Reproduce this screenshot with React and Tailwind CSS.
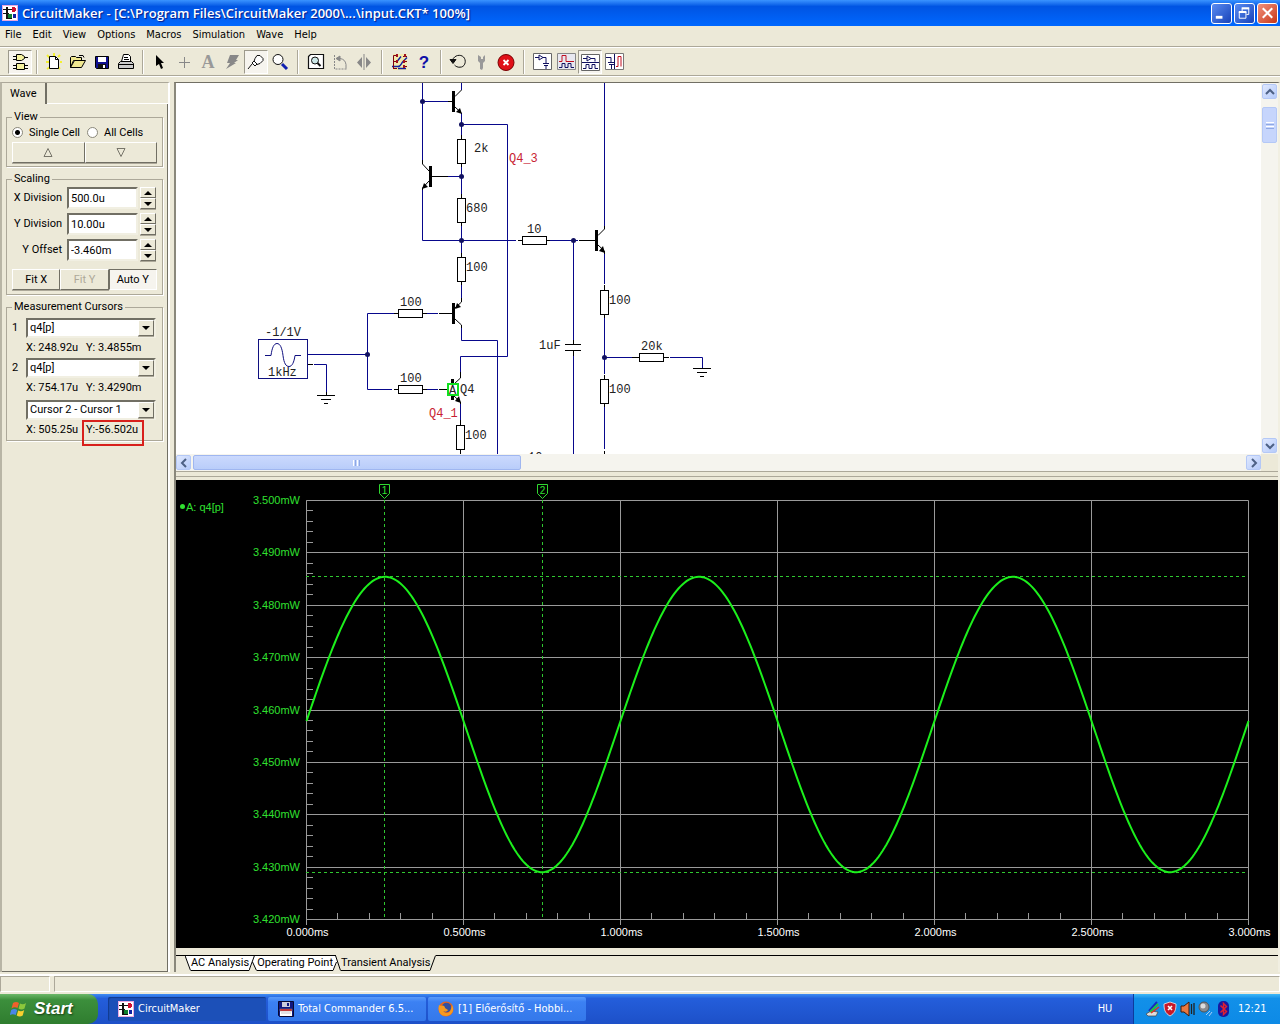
const MENUS = ['File', 'Edit', 'View', 'Options', 'Macros', 'Simulation', 'Wave', 'Help'];

function AppIcon() {
  return (
    <svg viewBox="0 0 16 16" className="h-4 w-4 shrink-0" shapeRendering="crispEdges">
      <rect width="16" height="16" fill="#e8a8e0" />
      <rect x="1" y="1" width="14" height="14" fill="#fff" />
      <path d="M1 4h9M1 8h6" fill="none" stroke="#111" strokeWidth="1" />
      <path d="M5 2v11h5" fill="none" stroke="#111" strokeWidth="2" />
      <path d="M10 2h3v1h1v3h-1v1h-3z" fill="#d01030" />
      <path d="M6 9h4v4H6z" fill="#108030" />
      <path d="M11 9h3v4h-3z" fill="#1020a0" />
    </svg>
  );
}

function TitleBar() {
  const base =
    'flex h-[21px] w-[21px] items-center justify-center rounded-[3px] border border-white bg-linear-to-br';
  return (
    <header className="flex h-[26px] shrink-0 items-center gap-1 bg-linear-to-b from-[#3a93ff] from-0% via-[#0054e3] via-25% to-[#0068ff] px-0.5">
      <AppIcon />
      <h1 className="flex-1 truncate font-['Open_Sans',sans-serif] text-[13px] leading-5 font-semibold text-white [text-shadow:1px_1px_1px_#0a1883]">
        CircuitMaker - [C:\Program Files\CircuitMaker 2000\...\input.CKT* 100%]
      </h1>
      <div className="flex gap-0.5">
        <button type="button" aria-label="Minimize" className={`${base} from-[#5b8cf2] to-[#1941b8]`}>
          <svg viewBox="0 0 20 20" className="h-5 w-5">
            <path d="M4 14.5h7" stroke="#fff" strokeWidth="3" />
          </svg>
        </button>
        <button type="button" aria-label="Restore" className={`${base} from-[#5b8cf2] to-[#1941b8]`}>
          <svg viewBox="0 0 20 20" className="h-5 w-5" fill="none" stroke="#fff">
            <path d="M7.500 8V5.500h7v6H12" />
            <path d="M7 5h8M4 9h8" strokeWidth="2" />
            <path d="M4.500 9v6.500h7V9" />
          </svg>
        </button>
        <button type="button" aria-label="Close" className={`${base} from-[#f0907a] to-[#c83410]`}>
          <svg viewBox="0 0 20 20" className="h-5 w-5">
            <path d="M5 5l10 10M15 5L5 15" stroke="#fff" strokeWidth="2.200" />
          </svg>
        </button>
      </div>
    </header>
  );
}

const TOOL_GROUPS = [
  {
    lead: 'w-2',
    tools: [
      {
        name: 'Digital parts',
        pressed: true,
        art: (
          <g fill="#f5f2a0" stroke="#000">
            <path d="M6.500 2.500h5l3 2v2l-3 2h-5z" />
            <path d="M6.500 11.500h8v6h-8z" />
            <path d="M3 4.500h3M3 7.500h3M15 5.500h3M3 13.500h3M3 16.500h3M15 13.500h3M15 16.500h3" />
          </g>
        ),
      },
    ],
  },
  {
    lead: 'w-2.5',
    tools: [
      {
        name: 'New',
        art: (
          <g>
            <path d="M3 3l3 3M10 1v3M16 3l-2 2M2 10h3M16 10h2M3 17l3-2M16 17l-2-2" stroke="#f4f030" strokeWidth="2" />
            <path d="M5.500 4.500h6l3 3v9h-9z" fill="#fff" stroke="#000" />
            <path d="M11.500 4.500v3h3" fill="none" stroke="#000" />
          </g>
        ),
      },
      {
        name: 'Open',
        art: (
          <g stroke="#000" fill="#f0e890">
            <path d="M2.500 15.500v-10l1-1h4l1 1h5v3h-8z" />
            <path d="M2.500 15.500l4-7h11l-4 7z" />
            <path d="M11 3.500h4l1 2" fill="none" />
          </g>
        ),
      },
      {
        name: 'Save',
        art: (
          <g>
            <path d="M3.500 4.500h13v12h-12l-1-1z" fill="#101090" stroke="#000" />
            <path d="M6 5h8v5H6z" fill="#fff" />
            <path d="M6 12h8v4H6z" fill="#111" />
            <path d="M11 13h2v3h-2z" fill="#fff" />
          </g>
        ),
      },
      {
        name: 'Print',
        art: (
          <g stroke="#000">
            <path d="M5.500 9.500l2-7h5l2 2v5" fill="#fff" />
            <path d="M8 5.500h4M8 7.500h5" />
            <path d="M2.500 11.500l2-2h11l2 2v5h-15z" fill="#ccc" />
            <path d="M2.500 12.500h15" />
          </g>
        ),
      },
    ],
  },
  {
    lead: 'w-2.5',
    tools: [
      {
        name: 'Arrow',
        art: <path d="M6 3l8 8h-3l2 5-2 1-2-5-3 2z" fill="#000" />,
      },
      { name: 'Wire', art: <path d="M10.500 5v11M5 10.500h11" stroke="#888" /> },
      {
        name: 'Text',
        art: (
          <text x="10" y="16" textAnchor="middle" fontSize="18" fontWeight="bold" fill="#999" fontFamily="Liberation Serif, serif">
            A
          </text>
        ),
      },
      { name: 'Delete', art: <path d="M8 3h9l-3 5h2l-4 3h2L4 17l4-6H5z" fill="#888" /> },
      {
        name: 'Probe',
        pressed: true,
        art: (
          <g fill="#fff" stroke="#111">
            <path d="M11 3.500h3l3 3v2l-3 3-3 1-3-3 1-3z" />
            <path d="M8 9l3 3-2 2-3-3zM6 12l-4 5" />
          </g>
        ),
      },
      {
        name: 'Zoom',
        art: (
          <g fill="none">
            <circle cx="8" cy="7.500" r="5" fill="#fff" stroke="#111" />
            <path d="M12 12l5 5" stroke="#1020b0" strokeWidth="3" />
          </g>
        ),
      },
    ],
  },
  {
    lead: 'w-3',
    tools: [
      {
        name: 'Zoom to fit',
        art: (
          <g fill="none" stroke="#111">
            <path d="M2.500 4.500l2-2h13v14h-15z" fill="#fff" strokeWidth="1.200" />
            <circle cx="9" cy="8.500" r="3.500" fill="#cde8e8" />
            <path d="M11.500 11l3 3" strokeWidth="2" />
          </g>
        ),
      },
      {
        name: 'Rotate',
        art: (
          <g fill="none" stroke="#888">
            <path d="M4.500 3v14h12" strokeDasharray="2 1" />
            <path d="M6 6.500h4a7 7 0 0 1 6 6v4" />
            <path d="M10 4v5l-4-2.500z" fill="#888" />
          </g>
        ),
      },
      {
        name: 'Mirror',
        art: <path d="M8 5v11l-5-5.500zM12 5v11l5-5.500zM9.500 2h1v16h-1z" fill="#888" />,
      },
    ],
  },
  {
    lead: 'w-3',
    tools: [
      {
        name: 'Select devices',
        art: (
          <g fill="none">
            <path d="M3 2h14v16H3z" fill="#f8ec80" opacity=".5" />
            <path d="M2 14.500h6c3 0 3-3 5-5l4-4M7 9.500l4-5M8 16.500h8" stroke="#1020a0" strokeWidth="1.400" />
            <path d="M7 3.500H3.500v13M3 9.500h4M3 16.500h4M13 4.500h4M13 9.500h4M13 14.500h4" stroke="#800010" />
            <path d="M6 2h2v3H6zM6 8h2v3H6zM13 8h2v3h-2zM13 13h2v3h-2zM14 2h2v3h-2z" fill="#a01020" />
          </g>
        ),
      },
      {
        name: 'Help',
        art: (
          <text x="10" y="16" textAnchor="middle" fontSize="17" fontWeight="bold" fill="#1010a8" fontFamily="Liberation Sans, sans-serif">
            ?
          </text>
        ),
      },
    ],
  },
  {
    lead: 'w-2.5',
    tools: [
      {
        name: 'Reset',
        art: (
          <g fill="none" stroke="#111">
            <path d="M4.500 8c2-5 8-6 11-3s2 9-2 10-6-1-7-2" />
            <path d="M2 7.500h6l-3 4z" fill="#111" />
          </g>
        ),
      },
      {
        name: 'Step',
        art: <path d="M6 3l3 2v2h2V5l2-2v6l-2 2v5l-1 2-2-1v-6L6 9z" fill="#999" />,
      },
      {
        name: 'Stop',
        art: (
          <g>
            <circle cx="10" cy="10.500" r="8" fill="#e01018" stroke="#700" />
            <path d="M7.500 8l5 5M12.500 8l-5 5" stroke="#fff" strokeWidth="1.800" />
          </g>
        ),
      },
    ],
  },
  {
    lead: 'w-3',
    tools: [
      {
        name: 'Schematic',
        art: (
          <g fill="none" stroke="#101060">
            <path d="M1.500 1.500h18v16h-18z" fill="#fff" stroke="#666" />
            <path d="M3 5.500h4M7 3v5l4-2.500zM11 5.500h3v6M11 11.500h6M12 13.500h4M14 14v3" />
          </g>
        ),
      },
      {
        name: 'Waves',
        art: (
          <g fill="none">
            <path d="M1.500 1.500h18v16h-18z" fill="#e8e8f0" stroke="#888" />
            <path d="M3 9.500h3v-6h4v6h8" stroke="#c01020" />
            <path d="M3 15.500h3v-4h3v4h3v-4h3v4h3" stroke="#101060" />
          </g>
        ),
      },
      {
        name: 'Split horizontally',
        pressed: true,
        art: (
          <g fill="none" stroke="#101060">
            <path d="M1.500 2.500h18v16h-18z" fill="#fff" stroke="#666" />
            <path d="M3 6.500h4M7 4v5l4-2.500zM11 6.500h4v3M2 10.500h17" />
            <path d="M3 16.500h3v-4h3v4h3v-4h3v4h3" />
          </g>
        ),
      },
      {
        name: 'Split vertically',
        art: (
          <g fill="none">
            <path d="M1.500 1.500h18v16h-18z" fill="#fff" stroke="#777" />
            <path d="M2 5.500h5v5M4 10.500h6M5 12.500h5M7.500 13v4M10.500 2v15" stroke="#101060" />
            <path d="M12 14.500h2v-10h3v10" stroke="#c01020" />
          </g>
        ),
      },
    ],
  },
];

function Toolbar() {
  return (
    <div
      role="toolbar"
      className="flex h-[29px] shrink-0 items-center border-y border-t-white border-b-[#aca899] shadow-[0_-1px_0_#aca899,0_1px_0_#fff]"
    >
      {TOOL_GROUPS.map((group, index) => (
        <div key={group.tools[0].name} className="flex items-center">
          <span className={`flex h-6 justify-center ${group.lead}`}>
            {index > 0 && <span className="w-0.5 border-r border-l border-r-white border-l-[#aca899]" />}
          </span>
          {group.tools.map((tool) => (
            <button
              key={tool.name}
              type="button"
              aria-label={tool.name}
              className={`flex h-6 w-6 items-center justify-center border ${
                tool.pressed ? 'border-t-[#9d9a8c] border-r-white border-b-white border-l-[#9d9a8c] bg-[#f6f4ee]' : 'border-transparent'
              }`}
            >
              <svg viewBox="0 0 20 20" className="h-5 w-5 shrink-0">
                {tool.art}
              </svg>
            </button>
          ))}
        </div>
      ))}
    </div>
  );
}

function Group({ title, className = '', children }) {
  return (
    <fieldset className={`relative border border-[#aca899] px-[5px] shadow-[1px_1px_0_#fff] ${className}`}>
      <legend className="px-0.5 leading-3">{title}</legend>
      {children}
    </fieldset>
  );
}

const RAISED =
  'border border-t-white border-r-[#716f64] border-b-[#716f64] border-l-white shadow-[0_1px_0_#aca899]';
const SUNKEN =
  'border-2 border-t-[#716f64] border-r-[#f1efe2] border-b-[#f1efe2] border-l-[#716f64] bg-white';

function ScalingField({ id, label, value }) {
  return (
    <div className="flex h-[22px] items-center">
      <label htmlFor={id} className="w-[50px] shrink-0 text-right whitespace-nowrap">
        {label}
      </label>
      <input id={id} defaultValue={value} className={`ml-[5px] h-[22px] w-[71px] min-w-0 px-0.5 ${SUNKEN}`} />
      <div className="ml-0.5 flex w-4 flex-col">
        <button type="button" aria-label={`Increase ${label}`} className={`flex h-[11px] items-center justify-center ${RAISED}`}>
          <svg viewBox="0 0 8 4" className="h-1 w-2">
            <path d="M0 4l4-4 4 4z" />
          </svg>
        </button>
        <button type="button" aria-label={`Decrease ${label}`} className={`flex h-[11px] items-center justify-center ${RAISED}`}>
          <svg viewBox="0 0 8 4" className="h-1 w-2">
            <path d="M0 0l4 4 4-4z" />
          </svg>
        </button>
      </div>
    </div>
  );
}

function CursorSelect({ id, label, value }) {
  return (
    <div className="flex h-5 items-center">
      <label htmlFor={id} className="w-3.5 shrink-0">
        {label}
      </label>
      <div className="relative w-[130px]">
        <select
          id={id}
          defaultValue={value}
          aria-label={label ? undefined : 'Difference'}
          className={`block h-5 w-full appearance-none px-0.5 ${SUNKEN}`}
        >
          <option>{value}</option>
        </select>
        <span
          className={`pointer-events-none absolute inset-y-0.5 right-0.5 flex w-4 items-center justify-center bg-[#ece9d8] ${RAISED}`}
        >
          <svg viewBox="0 0 8 4" className="h-1 w-2">
            <path d="M0 0l4 4 4-4z" />
          </svg>
        </span>
      </div>
    </div>
  );
}

function Readout({ x, y, marked }) {
  return (
    <p className="flex h-5 items-center pl-3.5">
      <span className="w-15">X: {x}</span>
      <span className="relative">
        {marked ? `Y:${y}` : `Y: ${y}`}
        {marked && <span className="absolute -top-0.5 -right-1.5 -bottom-2 -left-1 border-2 border-[#d8201c]" />}
      </span>
    </p>
  );
}

const RADIO = 'h-[11px] w-[11px] shrink-0 appearance-none rounded-full border border-[#8a887b]';

function Sidebar() {
  return (
    <aside className="flex w-[170px] shrink-0 flex-col border-t border-r-2 border-l-2 border-t-[#aca899] border-r-white border-l-[#b8b5a5] font-['Roboto','Liberation_Sans',sans-serif] text-[11px] leading-4">
      <div className="flex h-[21px]">
        <button type="button" className="border-r-2 border-[#716f64] px-2">
          Wave
        </button>
        <span className="flex-1 border-b border-white" />
      </div>
      <div className="flex flex-1 flex-col border-r border-b border-[#716f64] pt-[7px] pr-1 pl-1">
        <Group title="View" className="pb-[3px]">
          <div className="flex h-[19px] items-center">
            <label className="flex w-[75px] items-center gap-1.5 whitespace-nowrap">
              <input
                type="radio"
                name="cells"
                defaultChecked
                className={`${RADIO} bg-[radial-gradient(#000_2px,#fff_3px)]`}
              />
              Single Cell
            </label>
            <label className="flex items-center gap-1.5 whitespace-nowrap">
              <input type="radio" name="cells" className={`${RADIO} bg-white`} />
              All Cells
            </label>
          </div>
          <div className="flex">
            <button type="button" aria-label="Previous cell" className={`flex h-[21px] flex-1 items-center justify-center ${RAISED}`}>
              <svg viewBox="0 0 10 9" className="h-[9px] w-2.5">
                <path d="M1 8.500h8l-4-8z" fill="none" stroke="#77756a" />
              </svg>
            </button>
            <button type="button" aria-label="Next cell" className={`flex h-[21px] flex-1 items-center justify-center ${RAISED}`}>
              <svg viewBox="0 0 10 9" className="h-[9px] w-2.5">
                <path d="M1 .5h8l-4 8z" fill="none" stroke="#77756a" />
              </svg>
            </button>
          </div>
        </Group>

        <Group title="Scaling" className="mt-1.5 pb-1">
          <div className="flex flex-col gap-1 pt-0.5">
            <ScalingField id="x-division" label="X Division" value="500.0u" />
            <ScalingField id="y-division" label="Y Division" value="10.00u" />
            <ScalingField id="y-offset" label="Y Offset" value="-3.460m" />
          </div>
          <div className="mt-2 flex">
            <button type="button" className={`h-[21px] flex-1 ${RAISED}`}>
              Fit X
            </button>
            <button type="button" disabled className={`h-[21px] flex-1 text-[#aca899] ${RAISED}`}>
              Fit Y
            </button>
            <button
              type="button"
              className="h-[21px] flex-1 border border-t-[#716f64] border-r-white border-b-white border-l-[#716f64] bg-[#f6f4ee]"
            >
              Auto Y
            </button>
          </div>
        </Group>

        <Group title="Measurement Cursors" className="mt-1.5 pt-[5px]">
          <CursorSelect id="cursor-1" label="1" value="q4[p]" />
          <Readout x="248.92u" y="3.4855m" />
          <CursorSelect id="cursor-2" label="2" value="q4[p]" />
          <Readout x="754.17u" y="3.4290m" />
          <div className="pt-0.5">
            <CursorSelect id="cursor-diff" value="Cursor 2 - Cursor 1" />
            <Readout x="505.25u" y="-56.502u" marked />
          </div>
        </Group>
      </div>
    </aside>
  );
}

const WIRES = [
  'M422.500 83V160M422.500 101.500H448M461.500 83V90M461.500 113V135M461.500 124.500H507.500V356.500H460.500V372',
  'M461.500 167V194M448 176.500H461.500M422.500 190V240.500H516M461.500 226V253M461.500 285V298',
  'M550 240.500H578M573.500 240V340M573.500 356V454M604.500 83V226M604.500 254V284M604.500 318V374M604.500 357.500H632',
  'M670 357.500H702.500V368M604.500 407V449M308 354.500H367.500M394 313.500H367.500V389.500H392M426 313.500H438M426 389.500H438',
  'M461.500 328V340.500H497.500V454M460.500 404V420M314 364.500H326.500V392',
];

const LEADS = [
  'M448 101.500H453M455 96.500L461.500 90M455 107L461.500 113M461.500 135V139M461.500 164V167M461.500 194V198M461.500 223V226',
  'M422.500 160V164L429 171M429 181L422.500 188V190M432 176.500H448M461.500 253V257M461.500 282V285M461.500 298V302L455 308',
  'M455 319L461.500 325V328M422 313.500H427M439 313.500H452M422 389.500H427M439 389.500H447M394 313.500H398M394 389.500H398',
  'M460.500 372V378L454 384M454 396L460.500 402V404M460.500 420V425M460.500 450V454M518 240.500H522M547 240.500H550M579 240.500H595',
  'M598 235.500L604.500 229V226M598 245L604.500 251V254M604.500 285V290M604.500 315V318M604.500 375V379M604.500 404V407M604.500 451V454',
  'M632 357.500H639M664 357.500H669M308 364.500H313M565 344.500H581M565 350.500H581M573.500 340V344M573.500 351V356',
  'M317 395.500H335M321 399.500H331M324 403.500H328M326.500 392V395M693 368.500H711M697 372.500H707M700 376.500H704',
];

const RESISTORS = [
  { x: 457.5, y: 139.5, upright: true },
  { x: 457.5, y: 198.5, upright: true },
  { x: 457.5, y: 257.5, upright: true },
  { x: 456.5, y: 425.5, upright: true },
  { x: 600.5, y: 290.5, upright: true },
  { x: 600.5, y: 379.5, upright: true },
  { x: 522.5, y: 236.5 },
  { x: 398.5, y: 309.5 },
  { x: 398.5, y: 385.5 },
  { x: 639.5, y: 353.5 },
];

const JUNCTIONS = [
  [422.5, 101.5],
  [461.5, 124.5],
  [461.5, 176.5],
  [461.5, 240.5],
  [573.5, 240.5],
  [367.5, 354.5],
  [604.5, 357.5],
];

const PART_LABELS = [
  ['2k', 474, 152],
  ['680', 466, 212],
  ['10', 527, 233],
  ['100', 466, 271],
  ['100', 400, 306],
  ['-1/1V', 265, 336],
  ['1kHz', 268, 376],
  ['100', 400, 382],
  ['Q4', 460, 393],
  ['100', 465, 439],
  ['100', 609, 304],
  ['1uF', 539, 349],
  ['20k', 641, 350],
  ['100', 609, 393],
  ['10', 528, 461],
];

function Schematic() {
  return (
    <svg viewBox="176 83 1085 371" preserveAspectRatio="xMinYMin meet" className="block h-[371px] w-full" role="img" aria-label="Circuit schematic">
      <g fill="none" stroke="#08088c">
        {WIRES.map((d) => (
          <path key={d} d={d} />
        ))}
      </g>
      <g fill="none" stroke="#000">
        {LEADS.map((d) => (
          <path key={d} d={d} />
        ))}
      </g>
      <g fill="#fff" stroke="#000">
        {RESISTORS.map(({ x, y, upright }) => (
          <rect key={`${x}-${y}`} x={x} y={y} width={upright ? 8 : 24} height={upright ? 24 : 8} />
        ))}
      </g>
      <g fill="#000">
        <rect x="452" y="91" width="3" height="21" />
        <rect x="429" y="166" width="3" height="21" />
        <rect x="595" y="230" width="3" height="21" />
        <rect x="452" y="303" width="3" height="21" />
        <rect x="451" y="379" width="3" height="21" />
        <path d="M462 114l-2-6-4 4zM422 189l2-6 4 4zM605 253l-2-7-4 5zM455 309l2-6 4 4zM461 403l-2-7-4 5z" />
      </g>
      <g fill="#101060">
        {JUNCTIONS.map(([cx, cy]) => (
          <circle key={`${cx}-${cy}`} cx={cx} cy={cy} r="2.5" />
        ))}
      </g>
      <rect x="258.500" y="339.500" width="49" height="39" fill="#fff" stroke="#101080" />
      <path
        d="M265 355.500h6c1-8 3-12 6-12s5 4 6 12 3 11 6 11 5-4 6-11h6"
        fill="none"
        stroke="#101080"
      />
      <rect x="448" y="384" width="10" height="11" fill="#fff" stroke="#10e020" strokeWidth="2" />
      <g fontFamily="Liberation Mono, monospace" fontSize="12" fill="#222">
        {PART_LABELS.map(([label, x, y]) => (
          <text key={`${x}-${y}`} x={x} y={y}>
            {label}
          </text>
        ))}
        <text x="449" y="394">
          A
        </text>
        <g fill="#c81e32">
          <text x="509" y="162">
            Q4_3
          </text>
          <text x="429" y="417">
            Q4_1
          </text>
        </g>
      </g>
    </svg>
  );
}

function ScrollButton({ label, d }) {
  return (
    <button
      type="button"
      aria-label={label}
      className="flex h-[15px] w-[15px] shrink-0 items-center justify-center rounded-[2px] border border-[#b4c8f6] bg-linear-to-br from-[#dfe8fe] to-[#b6cbfa]"
    >
      <svg viewBox="0 0 10 10" className="h-2.5 w-2.5">
        <path d={d} fill="none" stroke="#4d6185" strokeWidth="2" />
      </svg>
    </button>
  );
}

function CircuitPane() {
  return (
    <section className="shrink-0 border-b border-[#aca899]">
      <div className="flex">
        <div className="h-[371px] min-w-0 flex-1 overflow-hidden bg-white">
          <Schematic />
        </div>
        <div className="flex w-[17px] flex-col items-center bg-[#f5f4ee] py-px">
          <ScrollButton label="Scroll up" d="M1 7l4-4 4 4" />
          <div className="mt-2 flex h-9 w-[15px] flex-col items-center justify-center gap-px rounded-[2px] border border-[#b4c8f6] bg-[#c6d5fc]">
            <span className="h-px w-2 bg-white" />
            <span className="h-px w-2 bg-[#8ea8e4]" />
            <span className="h-px w-2 bg-white" />
            <span className="h-px w-2 bg-[#8ea8e4]" />
          </div>
          <span className="flex-1" />
          <ScrollButton label="Scroll down" d="M1 3l4 4 4-4" />
        </div>
      </div>
      <div className="flex h-[17px]">
        <div className="flex flex-1 items-center bg-[#f5f4ee]">
          <ScrollButton label="Scroll left" d="M7 1L3 5l4 4" />
          <div className="ml-0.5 flex h-[15px] w-[30.2%] items-center justify-center gap-px rounded-[2px] border border-[#9fb6f0] bg-linear-to-b from-[#cbd9fd] to-[#b9cdfa]">
            <span className="h-1.5 w-px bg-white" />
            <span className="h-1.5 w-px bg-[#8ea8e4]" />
            <span className="h-1.5 w-px bg-white" />
            <span className="h-1.5 w-px bg-[#8ea8e4]" />
          </div>
          <span className="flex-1" />
          <ScrollButton label="Scroll right" d="M3 1l4 4-4 4" />
        </div>
        <span className="w-[17px]" />
      </div>
    </section>
  );
}

const LEFT = 306.5;
const TOP = 500.5;
const RIGHT = 1248.5;
const BOTTOM = 919.5;
const POWERS = ['3.500', '3.490', '3.480', '3.470', '3.460', '3.450', '3.440', '3.430', '3.420'];
const TIMES = ['0.000', '0.500', '1.000', '1.500', '2.000', '2.500', '3.000'];
const snap = (value) => Math.floor(value) + 0.5;
const rowY = (row) => snap(TOP + (row * (BOTTOM - TOP)) / 8);
const columnX = (column) => snap(LEFT + (column * (RIGHT - LEFT)) / 6);

const TRACE = Array.from({ length: 472 }, (_, i) => {
  const x = i * 2;
  const s = Math.sin((2 * Math.PI * x) / 314);
  return `${LEFT + x},${(721 - 147.7 * s + 3.5 * s * s).toFixed(2)}`;
}).join(' ');

const CURSORS = [
  { id: '1', x: 384.5 },
  { id: '2', x: 542.5 },
];

function WaveChart() {
  return (
    <svg
      viewBox="176 480 1102 468"
      preserveAspectRatio="xMinYMin meet"
      className="block h-[468px] w-full"
      role="img"
      aria-label="Transient analysis of q4[p]"
    >
      <g stroke="#9a9a9a">
        {POWERS.map((label, row) => (
          <path key={label} d={`M${LEFT} ${rowY(row)}H${RIGHT}`} />
        ))}
        {TIMES.map((label, column) => (
          <path key={label} d={`M${columnX(column)} ${TOP}V925`} />
        ))}
        {Array.from({ length: 40 }, (_, i) => (
          <path key={i} d={`M${LEFT} ${snap(TOP + i * 10.475)}h6.500`} />
        ))}
        {Array.from({ length: 30 }, (_, i) => (
          <path key={i} d={`M${snap(LEFT + i * 31.4)} ${BOTTOM}v-6.500`} />
        ))}
      </g>
      <g fill="none" stroke="#30c830" strokeDasharray="3 3">
        <path d="M306 576.500H1248M306 872.500H1248" />
        {CURSORS.map(({ id, x }) => (
          <path key={id} d={`M${x} 500V919`} />
        ))}
      </g>
      <polyline points={TRACE} fill="none" stroke="#1cf01c" strokeWidth="2" />
      <g fontFamily="Liberation Sans, Arial, sans-serif" fontSize="11" fill="#30e030">
        {CURSORS.map(({ id, x }) => (
          <g key={id}>
            <path d={`M${x - 5} 484.500h10v9l-5 5-5-5z`} fill="#000" stroke="#30d830" />
            <text x={x} y="494" textAnchor="middle" fontSize="10">
              {id}
            </text>
          </g>
        ))}
        <circle cx="182.500" cy="506.500" r="2.500" />
        <text x="186" y="511">
          A: q4[p]
        </text>
        {POWERS.map((label, row) => (
          <text key={label} x="300" y={rowY(row) + 3.5} textAnchor="end">
            {label}mW
          </text>
        ))}
        <g fill="#fff">
          {TIMES.map((label, column) => (
            <text key={label} x={columnX(column) + 1} y="936" textAnchor="middle">
              {label}ms
            </text>
          ))}
        </g>
      </g>
    </svg>
  );
}

function AnalysisTabs() {
  return (
    <nav className="flex h-[24px] shrink-0 items-start pt-[7px] font-['Roboto','Liberation_Sans',sans-serif] text-[11px] leading-[14px]">
      <span className="w-[9px] border-t border-black" />
      <svg viewBox="0 0 6 16" className="h-4 w-1.5">
        <path d="M0 0h6v16H5z" fill="#fff" />
        <path d="M0 .5h6M0 .5L5.500 15.500" fill="none" stroke="#000" />
      </svg>
      <button type="button" className="h-4 border-y border-black bg-white">
        AC Analysis
      </button>
      <svg viewBox="0 0 8 16" className="h-4 w-2">
        <path d="M0 0h8v16L4 8 0 16z" fill="#fff" />
        <path d="M0 .5h8M0 15.500L5.500 .5M3.500 7L7.500 15.500" fill="none" stroke="#000" />
      </svg>
      <button type="button" className="h-4 border-y border-black bg-white">
        Operating Point
      </button>
      <svg viewBox="0 0 8 16" className="h-4 w-2">
        <path d="M0 0h3l1 8-4 8z" fill="#fff" />
        <path d="M0 .5h3M0 15.500L3.500 7M2.500 .5L7.500 15.500" fill="none" stroke="#000" />
      </svg>
      <button type="button" aria-current="page" className="h-4 border-t border-b border-t-transparent border-b-black">
        Transient Analysis
      </button>
      <svg viewBox="0 0 6 16" className="h-4 w-1.5">
        <path d="M0 15.500L5.500 .5" stroke="#000" />
      </svg>
      <span className="flex-1 border-t border-black" />
    </nav>
  );
}

function TaskButton({ active, icon, children }) {
  return (
    <button
      type="button"
      className={`flex h-6 w-[158px] items-center gap-1 rounded-[2px] pl-2.5 text-left ${
        active
          ? 'bg-[#1c50b8] shadow-[inset_1px_1px_1px_#123a8e]'
          : 'bg-linear-to-b from-[#5a9bfa] from-0% via-[#3c81f3] via-20% to-[#3478ea]'
      }`}
    >
      {icon}
      <span className="truncate">{children}</span>
    </button>
  );
}

function FloppyIcon() {
  return (
    <svg viewBox="0 0 16 16" className="h-4 w-4 shrink-0">
      <path d="M.5 .5h15v15h-14l-1-1z" fill="#101880" stroke="#080830" />
      <path d="M4 1h8v5H4z" fill="#ccd" />
      <path d="M9 2h2v3H9z" fill="#101880" />
      <path d="M2 8h12v7H2z" fill="#fff" />
      <path d="M2 8h12v2H2zM3 12h10" fill="#d02020" stroke="#888" strokeWidth=".5" />
    </svg>
  );
}

function FoxIcon() {
  return (
    <svg viewBox="0 0 16 16" className="h-4 w-4 shrink-0">
      <circle cx="8" cy="8" r="7.500" fill="#e8641c" />
      <circle cx="8.500" cy="6.500" r="4.800" fill="#3450a0" />
      <path d="M1 4l2 1c2-1 4 0 4 2l3 2c-1 2-3 2-5 1 2 3 7 3 8-2l1-4c3 5 0 11-6 11S-.5 10 1 4z" fill="#f59a20" />
    </svg>
  );
}

function TrayIcons() {
  return (
    <svg viewBox="0 0 86 16" className="h-4 w-[86px]">
      <path d="M0 13l5-3 7 1-2 4H2z" fill="#ddd" stroke="#444" strokeWidth=".7" />
      <path d="M3 10l8-9" stroke="#1828c0" strokeWidth="2" />
      <path d="M4 11l8-8" stroke="#20c040" strokeWidth="2" />
      <path d="M5 12l8-6" stroke="#e03020" strokeWidth="1.500" />
      <path d="M24 1l6 2c0 6-1 9-6 12-5-3-6-6-6-12z" fill="#c81828" stroke="#eee" strokeWidth=".8" />
      <path d="M22 5l4 4M26 5l-4 4" stroke="#fff" strokeWidth="1.600" />
      <path d="M35 5h3l5-4v14l-5-4h-3z" fill="#e87840" stroke="#401808" />
      <path d="M45.500 3v10M48 2v12" stroke="#222" strokeWidth="1.300" />
      <circle cx="58" cy="6" r="5" fill="#8a8c90" stroke="#555" />
      <circle cx="57" cy="5" r="2.500" fill="#ddd" />
      <path d="M60 14l4-4M63 15l3-4" stroke="#a8ccf8" />
      <rect x="72" y="0" width="11" height="16" rx="5" fill="#1818a0" />
      <path d="M74.500 4.500l6 6-3 3V2.500l3 3-6 6" fill="none" stroke="#e02030" strokeWidth="1.500" />
    </svg>
  );
}

function Taskbar() {
  return (
    <footer className="flex h-[30px] shrink-0 items-stretch bg-linear-to-b from-[#3f8cf3] from-0% via-[#245edb] via-15% to-[#1d50c8] font-['DejaVu_Sans_Condensed','Noto_Sans',sans-serif] text-[11px] text-white">
      <button
        type="button"
        className="flex w-[98px] items-center gap-1.5 rounded-r-[10px] bg-linear-to-b from-[#6cb86a] from-0% via-[#3c8f3c] via-20% to-[#2f7d2f] pl-2.5 font-['Liberation_Sans',Arial,sans-serif] text-[17px] leading-5 font-bold italic [text-shadow:1px_1px_2px_#123c12]"
      >
        <svg viewBox="0 0 18 18" className="h-[18px] w-[18px]">
          <path d="M3 3c2-1.500 4-1.500 6 0L7.500 8c-2-1-4-1-6 .5z" fill="#f0602c" />
          <path d="M10 3.500c2 1.200 4 1 6-.5l-1.500 5.500c-2 1.300-4 1.300-6 0z" fill="#8cc83c" />
          <path d="M1.200 10c2-1.500 4-1.500 6 0L5.700 15c-2-1.200-4-1.200-6 .3z" fill="#4a86e8" />
          <path d="M8.200 10.500c2 1.200 4 1 6-.5l-1.500 5.500c-2 1.300-4 1.300-6 0z" fill="#f8d030" />
        </svg>
        Start
      </button>
      <div className="flex flex-1 items-center gap-0.5 pl-2.5">
        <TaskButton active icon={<AppIcon />}>
          CircuitMaker
        </TaskButton>
        <TaskButton icon={<FloppyIcon />}>Total Commander 6.5...</TaskButton>
        <TaskButton icon={<FoxIcon />}>[1] Előerősítő - Hobbi...</TaskButton>
      </div>
      <span className="flex w-14 items-center justify-center">HU</span>
      <div className="flex w-[147px] items-center gap-1.5 border-l border-[#0d3b9c] bg-linear-to-b from-[#3cb8f8] from-0% via-[#1290e9] via-15% to-[#0d8ae6] pl-3">
        <TrayIcons />
        <time>12:21</time>
      </div>
    </footer>
  );
}

export default function App() {
  return (
    <div className="flex min-h-screen flex-col bg-[#ece9d8] font-['Liberation_Sans',Arial,sans-serif] text-black">
      <TitleBar />
      <nav className="flex h-[21px] shrink-0 items-center gap-[11px] px-[5px] pb-1 font-['DejaVu_Sans_Condensed','Noto_Sans',sans-serif] text-[11px] leading-4">
        {MENUS.map((menu) => (
          <button key={menu} type="button">
            {menu}
          </button>
        ))}
      </nav>
      <Toolbar />
      <main className="flex flex-1 pt-1.5">
        <Sidebar />
        <div className="ml-1 flex min-w-0 flex-1 flex-col border-t border-r-2 border-l-2 border-t-[#716f64] border-r-[#f1efe2] border-l-[#8a887b]">
          <CircuitPane />
          <div className="mt-1 flex flex-1 flex-col border-t border-[#aca899] pt-[3px]">
            <section className="flex-1 bg-black">
              <WaveChart />
            </section>
            <AnalysisTabs />
          </div>
        </div>
      </main>
      <div className="mt-0.5 flex h-5 shrink-0 gap-1 border-t-2 border-white pb-0.5">
        <span className="w-[50px] border border-t-[#aca899] border-r-white border-b-white border-l-[#aca899]" />
        <span className="flex-1 border border-t-[#aca899] border-r-white border-b-white border-l-[#aca899]" />
      </div>
      <Taskbar />
    </div>
  );
}
